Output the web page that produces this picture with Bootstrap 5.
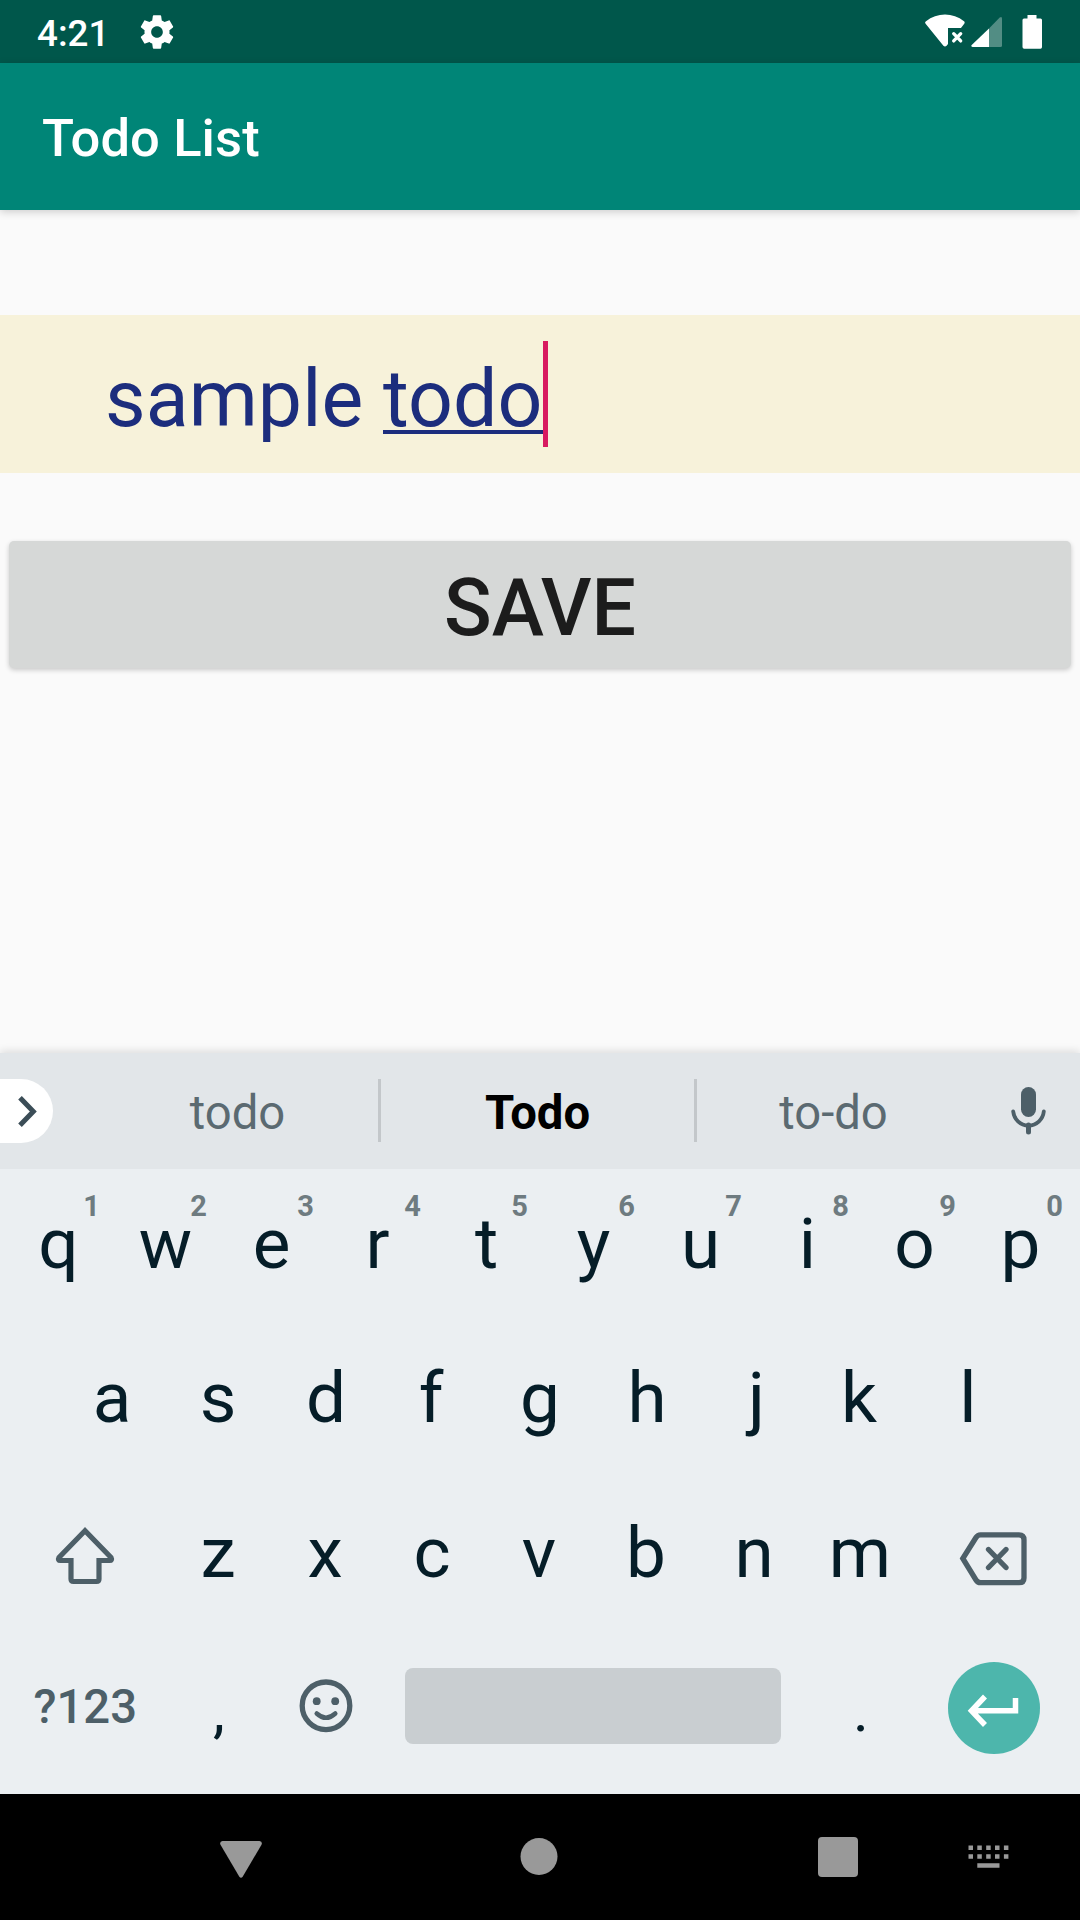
<!DOCTYPE html>
<html lang="en">
<head>
<meta charset="utf-8">
<meta name="viewport" content="width=device-width, initial-scale=1">
<title>Todo List</title>
<link href="https://cdn.jsdelivr.net/npm/bootstrap@5.3.0/dist/css/bootstrap.min.css" rel="stylesheet">
<style>
body { font-family: Roboto, "Noto Sans", sans-serif; background: #fafafa; line-height: 1; }
svg { display: block; flex: none; }
.phone { width: 1080px; height: 1920px; }
.weight-medium, .weight-medium:hover { font-weight: 500; }
.status-bar { height: 63px; background: #00574b; padding: 0 38px 0 37px; }
.status-clock { font-size: 36.75px; padding-top: 5px; width: 100px; }
.app-bar { height: 147px; background: #008577; padding: 4px 42px 0; box-shadow: 0 2px 8px rgba(0,0,0,.18); }
.app-title { font-size: 52.5px; letter-spacing: .1px; }
.todo-field { height: 158px; margin-top: 105px; padding: 10px 105px 0; background: #f7f2da; color: #1c2d7d; font-size: 78.75px; letter-spacing: .1px; white-space: pre; }
.composing::before { content: ""; position: absolute; left: 0; right: 0; bottom: 4px; height: 4.5px; background: #1c2d7d; }
.caret { position: absolute; right: -5px; top: -19px; width: 5px; height: 106px; background: #d81b60; }
.save-btn, .save-btn:hover { margin: 68px 9px 0; height: 126.5px; padding: 8px 0 0; border: 0; border-radius: 5px; background: #d6d8d7; color: #1c1c1c; font-size: 78.75px; line-height: 1; box-shadow: 0 2px 5px rgba(0,0,0,.2); }
.keyboard { height: 741px; background: #ebeff2; color: #051d28; box-shadow: 0 -2px 8px rgba(0,0,0,.12); }
.suggest-strip { height: 116px; background: #e2e6e9; font-size: 47.25px; }
.suggest-strip > * { flex: none; }
.expand-chip { width: 52.5px; height: 64px; background: #fff; border-radius: 0 32px 32px 0; }
.suggestion { width: 273px; padding-top: 6px; color: #5b6a71; }
.suggestion.first-word { width: 281px; margin-left: 44.5px; }
.suggestion.best-word { width: 313px; color: #000; }
.strip-line { width: 3px; height: 63px; margin-bottom: 1px; background: #c3c7ca; }
.key-line { height: 154.5px; padding: 0 5px 4.5px; font-size: 71px; }
.key-line.inset-line { padding-left: 58.5px; padding-right: 58.5px; }
.letter-key { width: 107px; padding-bottom: 2px; }
.nudge-left { padding-right: 4px; }
.nudge-slight { padding-right: 2px; }
.nudge-right { padding-left: 5px; }
.punct-key { font-size: 60px; padding: 6px 0 0; }
.wide-key { width: 160.5px; }
.end-key { padding-right: 2px; }
.key-hint { position: absolute; right: 12px; top: 23px; font-size: 29px; color: #6e7b80; line-height: 1; }
.symbol-label { font-size: 47.25px; color: #4d5f68; }
.space-bar { width: 376px; height: 76px; margin: 0 26.5px 3.5px 25.5px; border-radius: 8px; background: #c9ced1; }
.nav-strip { height: 126px; padding-left: 220px; }
.nav-home { margin-left: 258px; }
.nav-recent { margin-left: 260px; }
.nav-ime { margin-left: 110px; }
</style>
</head>
<body>
<div class="phone d-flex flex-column overflow-hidden">
  <header class="status-bar d-flex align-items-center text-white">
    <span class="status-clock weight-medium">4:21</span>
    <svg width="40" height="40" viewBox="0 0 24 24" fill="#fff"><path d="M19.43 12.98c.04-.32.07-.64.07-.98s-.03-.66-.07-.98l2.11-1.65c.19-.15.24-.42.12-.64l-2-3.46c-.12-.22-.39-.3-.61-.22l-2.49 1c-.52-.4-1.08-.73-1.69-.98l-.38-2.65C14.46 2.18 14.25 2 14 2h-4c-.25 0-.46.18-.49.42l-.38 2.65c-.61.25-1.17.59-1.69.98l-2.49-1c-.23-.09-.49 0-.61.22l-2 3.46c-.13.22-.07.49.12.64l2.11 1.65c-.04.32-.07.65-.07.98s.03.66.07.98l-2.11 1.65c-.19.15-.24.42-.12.64l2 3.46c.12.22.39.3.61.22l2.49-1c.52.4 1.08.73 1.69.98l.38 2.65c.03.24.24.42.49.42h4c.25 0 .46-.18.49-.42l.38-2.65c.61-.25 1.17-.59 1.69-.98l2.49 1c.23.09.49 0 .61-.22l2-3.46c.12-.22.07-.49-.12-.64l-2.11-1.65zM12 15.5c-1.93 0-3.5-1.57-3.5-3.5s1.57-3.5 3.500-3.500 3.500 1.570 3.500 3.500-1.570 3.500-3.500 3.500z"/></svg>
    <div class="d-flex align-items-center ms-auto">
      <svg width="46" height="35" viewBox="0 0 46 35"><path d="M.6 9.8Q-.6 8.3 1 7.2C12-1.7 28-1.7 39 7.2q1.200 1 .2 2.600L36 14H23V30L21.600 31.800Q20 33.300 18.400 31.800Z" fill="#fff"/><path d="M28.700 19.700l7 7.200m0-7.200l-7 7.200" stroke="#fff" stroke-width="3.300" stroke-linecap="round"/></svg>
      <svg width="32" height="32" viewBox="0 0 32 32"><path d="M18 12.500L28.700 1.500Q31 0 31 2.500V29.500q0 1.500-1.500 1.500H18Z" fill="#fff" opacity=".32"/><path d="M18 12.500V31H1.500Q-.5 30.500.7 29Z" fill="#fff"/></svg>
      <svg class="ms-3" width="23" height="34" viewBox="0 0 23 34" fill="#fff"><path d="M8.500 0h9v3.500h4q1.500 0 1.500 1.500V32q0 1.800-1.500 1.800H5.200Q3.500 33.800 3.500 32V5q0-1.500 1.500-1.500h3.500z"/></svg>
    </div>
  </header>
  <nav class="app-bar d-flex align-items-center text-white">
    <h1 class="app-title weight-medium m-0">Todo List</h1>
  </nav>
  <main class="flex-grow-1 d-flex flex-column">
    <div class="todo-field d-flex align-items-center">sample <span class="composing position-relative">todo<i class="caret"></i></span></div>
    <button class="btn save-btn weight-medium">SAVE</button>
  </main>
  <section class="keyboard">
    <div class="suggest-strip d-flex align-items-center text-center">
      <div class="expand-chip"><svg width="52" height="64" viewBox="0 0 52 64"><path d="M20 18.700L33.300 32.500L20 46.300" fill="none" stroke="#3b4d57" stroke-width="5"/></svg></div>
      <div class="suggestion first-word">todo</div>
      <div class="strip-line"></div>
      <div class="suggestion best-word fw-bold">Todo</div>
      <div class="strip-line"></div>
      <div class="suggestion">to-do</div>
      <svg width="110" height="64" viewBox="-1 0 110 64"><rect x="50" y="8" width="15" height="30" rx="7.500" fill="#4d5f68"/><path d="M42.200 32.500C43 40 49 46.500 57.500 46.500S72 40 72.800 32.500" fill="none" stroke="#4d5f68" stroke-width="3.800" stroke-linecap="round"/><path d="M57.500 46v7" stroke="#4d5f68" stroke-width="5" stroke-linecap="round"/></svg>
    </div>
    <div class="key-line d-flex align-items-stretch">
      <div class="letter-key position-relative d-flex align-items-center justify-content-center">q<span class="key-hint fw-bold">1</span></div>
      <div class="letter-key position-relative d-flex align-items-center justify-content-center">w<span class="key-hint fw-bold">2</span></div>
      <div class="letter-key nudge-slight position-relative d-flex align-items-center justify-content-center">e<span class="key-hint fw-bold">3</span></div>
      <div class="letter-key nudge-left position-relative d-flex align-items-center justify-content-center">r<span class="key-hint fw-bold">4</span></div>
      <div class="letter-key position-relative d-flex align-items-center justify-content-center">t<span class="key-hint fw-bold">5</span></div>
      <div class="letter-key position-relative d-flex align-items-center justify-content-center">y<span class="key-hint fw-bold">6</span></div>
      <div class="letter-key position-relative d-flex align-items-center justify-content-center">u<span class="key-hint fw-bold">7</span></div>
      <div class="letter-key position-relative d-flex align-items-center justify-content-center">i<span class="key-hint fw-bold">8</span></div>
      <div class="letter-key position-relative d-flex align-items-center justify-content-center">o<span class="key-hint fw-bold">9</span></div>
      <div class="letter-key nudge-slight position-relative d-flex align-items-center justify-content-center">p<span class="key-hint fw-bold">0</span></div>
    </div>
    <div class="key-line inset-line d-flex align-items-center text-center">
      <div class="letter-key">a</div><div class="letter-key nudge-slight">s</div><div class="letter-key">d</div><div class="letter-key nudge-left">f</div><div class="letter-key">g</div><div class="letter-key">h</div><div class="letter-key nudge-right">j</div><div class="letter-key nudge-left">k</div><div class="letter-key">l</div>
    </div>
    <div class="key-line d-flex align-items-center text-center">
      <div class="wide-key d-flex justify-content-center"><svg width="80" height="80" viewBox="0 0 80 80"><path d="M40 17.800L14 44.500q-1.500 3 1.500 3H26V66q0 2.500 2.500 2.500h23Q54 68.500 54 66V47.500H64.500q3 0 1.500-3Z" fill="none" stroke="#4d5f68" stroke-width="5.200"/></svg></div>
      <div class="letter-key nudge-slight">z</div><div class="letter-key nudge-slight">x</div><div class="letter-key nudge-slight">c</div><div class="letter-key nudge-slight">v</div><div class="letter-key nudge-slight">b</div><div class="letter-key">n</div><div class="letter-key nudge-slight">m</div>
      <div class="wide-key end-key d-flex justify-content-center"><svg width="80" height="80" viewBox="0 0 80 80" fill="none" stroke="#4d5f68" stroke-width="5.300"><path d="M8.800 45.500L22 24.500q1.700-2.700 4.500-2.700H65q5 0 5 5V65q0 4.700-5 4.700H26.500q-2.800 0-4.500-2.700Z"/><path d="M34.500 36.500L52 54.500M52 36.500L34.500 54.500" stroke-linecap="round"/></svg></div>
    </div>
    <div class="key-line d-flex align-items-center text-center">
      <div class="wide-key symbol-label weight-medium">?123</div>
      <div class="letter-key punct-key">,</div>
      <div class="letter-key d-flex justify-content-center"><svg width="60" height="60" viewBox="0 0 60 60"><circle cx="30" cy="28.800" r="23.800" fill="none" stroke="#4d5f68" stroke-width="5.300"/><g fill="#4d5f68"><circle cx="20.700" cy="24.200" r="3.900"/><circle cx="39.200" cy="24.200" r="3.900"/></g><path d="M20.700 36.500q9.300 8.500 18.600 0" fill="none" stroke="#4d5f68" stroke-width="4.500" stroke-linecap="round"/></svg></div>
      <div class="space-bar"></div>
      <div class="letter-key punct-key">.</div>
      <div class="wide-key end-key d-flex justify-content-center"><svg width="92" height="92" viewBox="0 0 92 92"><circle cx="46" cy="46" r="46" fill="#4db6ac"/><path d="M67.500 36V48.800H25M37 34.500L23.500 48.800L37 63" fill="none" stroke="#fff" stroke-width="5.500"/></svg></div>
    </div>
  </section>
  <footer class="nav-strip bg-black d-flex align-items-center">
    <svg width="42" height="42" viewBox="0 0 42 42" fill="#999"><path d="M2.500 5h37q3.300.8 2 3.800L22.800 40.500q-1.800 2.500-3.600 0L.5 8.800Q-.8 5.800 2.500 5z"/></svg>
    <svg class="nav-home" width="38" height="38" viewBox="0 0 38 38"><circle cx="19" cy="18.500" r="18.500" fill="#999"/></svg>
    <svg class="nav-recent" width="40" height="40" viewBox="0 0 40 40"><rect width="40" height="40" rx="4" fill="#999"/></svg>
    <svg class="nav-ime" width="41" height="24" viewBox="0 0 41 24" fill="#999"><path d="M.5.500h4.500V5H.5zM9.300.500h4.500V5H9.300zM18.200.500h4.500V5h-4.500zM27 .500h4.500V5H27zM35.900.500h4.500V5h-4.500zM.5 9.300h4.500v4.500H.5zM9.300 9.300h4.500v4.500H9.300zM18.200 9.300h4.500v4.500h-4.500zM27 9.300h4.500v4.500H27zM35.900 9.300h4.500v4.500h-4.500zM9.300 18.200h22.200v4.500H9.300z"/></svg>
  </footer>
</div>
<script src="https://cdn.jsdelivr.net/npm/bootstrap@5.3.0/dist/js/bootstrap.bundle.min.js"></script>
</body>
</html>
